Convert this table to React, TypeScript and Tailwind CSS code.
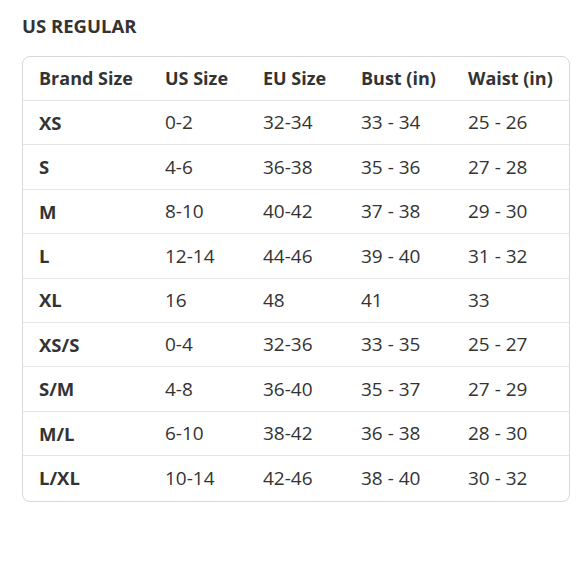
const rows = [
  ['XS', '0-2', '32-34', '33 - 34', '25 - 26'],
  ['S', '4-6', '36-38', '35 - 36', '27 - 28'],
  ['M', '8-10', '40-42', '37 - 38', '29 - 30'],
  ['L', '12-14', '44-46', '39 - 40', '31 - 32'],
  ['XL', '16', '48', '41', '33'],
  ['XS/S', '0-4', '32-36', '33 - 35', '25 - 27'],
  ['S/M', '4-8', '36-40', '35 - 37', '27 - 29'],
  ['M/L', '6-10', '38-42', '36 - 38', '28 - 30'],
  ['L/XL', '10-14', '42-46', '38 - 40', '30 - 32'],
];

const headers = ['Brand Size', 'US Size', 'EU Size', 'Bust (in)', 'Waist (in)'];
const widths = ['w-[126px]', 'w-[98px]', 'w-[98px]', 'w-[107px]', 'w-[117px]'];

export default function App() {
  return (
    <div className="w-[580px] h-[580px] bg-white pl-[22px] pt-[15px] text-[#333] font-['Open_Sans','Noto_Sans',sans-serif]">
      <h2 className="text-[18.5px] font-bold leading-[22px] text-[#333]">US REGULAR</h2>
      <div className="mt-[19px] w-[548px] border border-[#d5d9d9] rounded-[8px] overflow-hidden">
        <div className="flex h-[44px] items-center border-b border-[#e3e6e6]">
          {headers.map((h, i) => (
            <div key={h} className={`${widths[i]} pl-[16px] text-[18px] font-bold whitespace-nowrap`}>
              {h}
            </div>
          ))}
        </div>
        {rows.map((r, ri) => (
          <div
            key={ri}
            className={`flex h-[44.4px] items-center ${ri < rows.length - 1 ? 'border-b border-[#e3e6e6]' : ''}`}
          >
            {r.map((c, i) => (
              <div
                key={i}
                className={`${widths[i]} pl-[16px] whitespace-nowrap ${i === 0 ? 'text-[18.5px] font-bold' : 'text-[19px] font-normal'}`}
              >
                {c}
              </div>
            ))}
          </div>
        ))}
      </div>
    </div>
  );
}
